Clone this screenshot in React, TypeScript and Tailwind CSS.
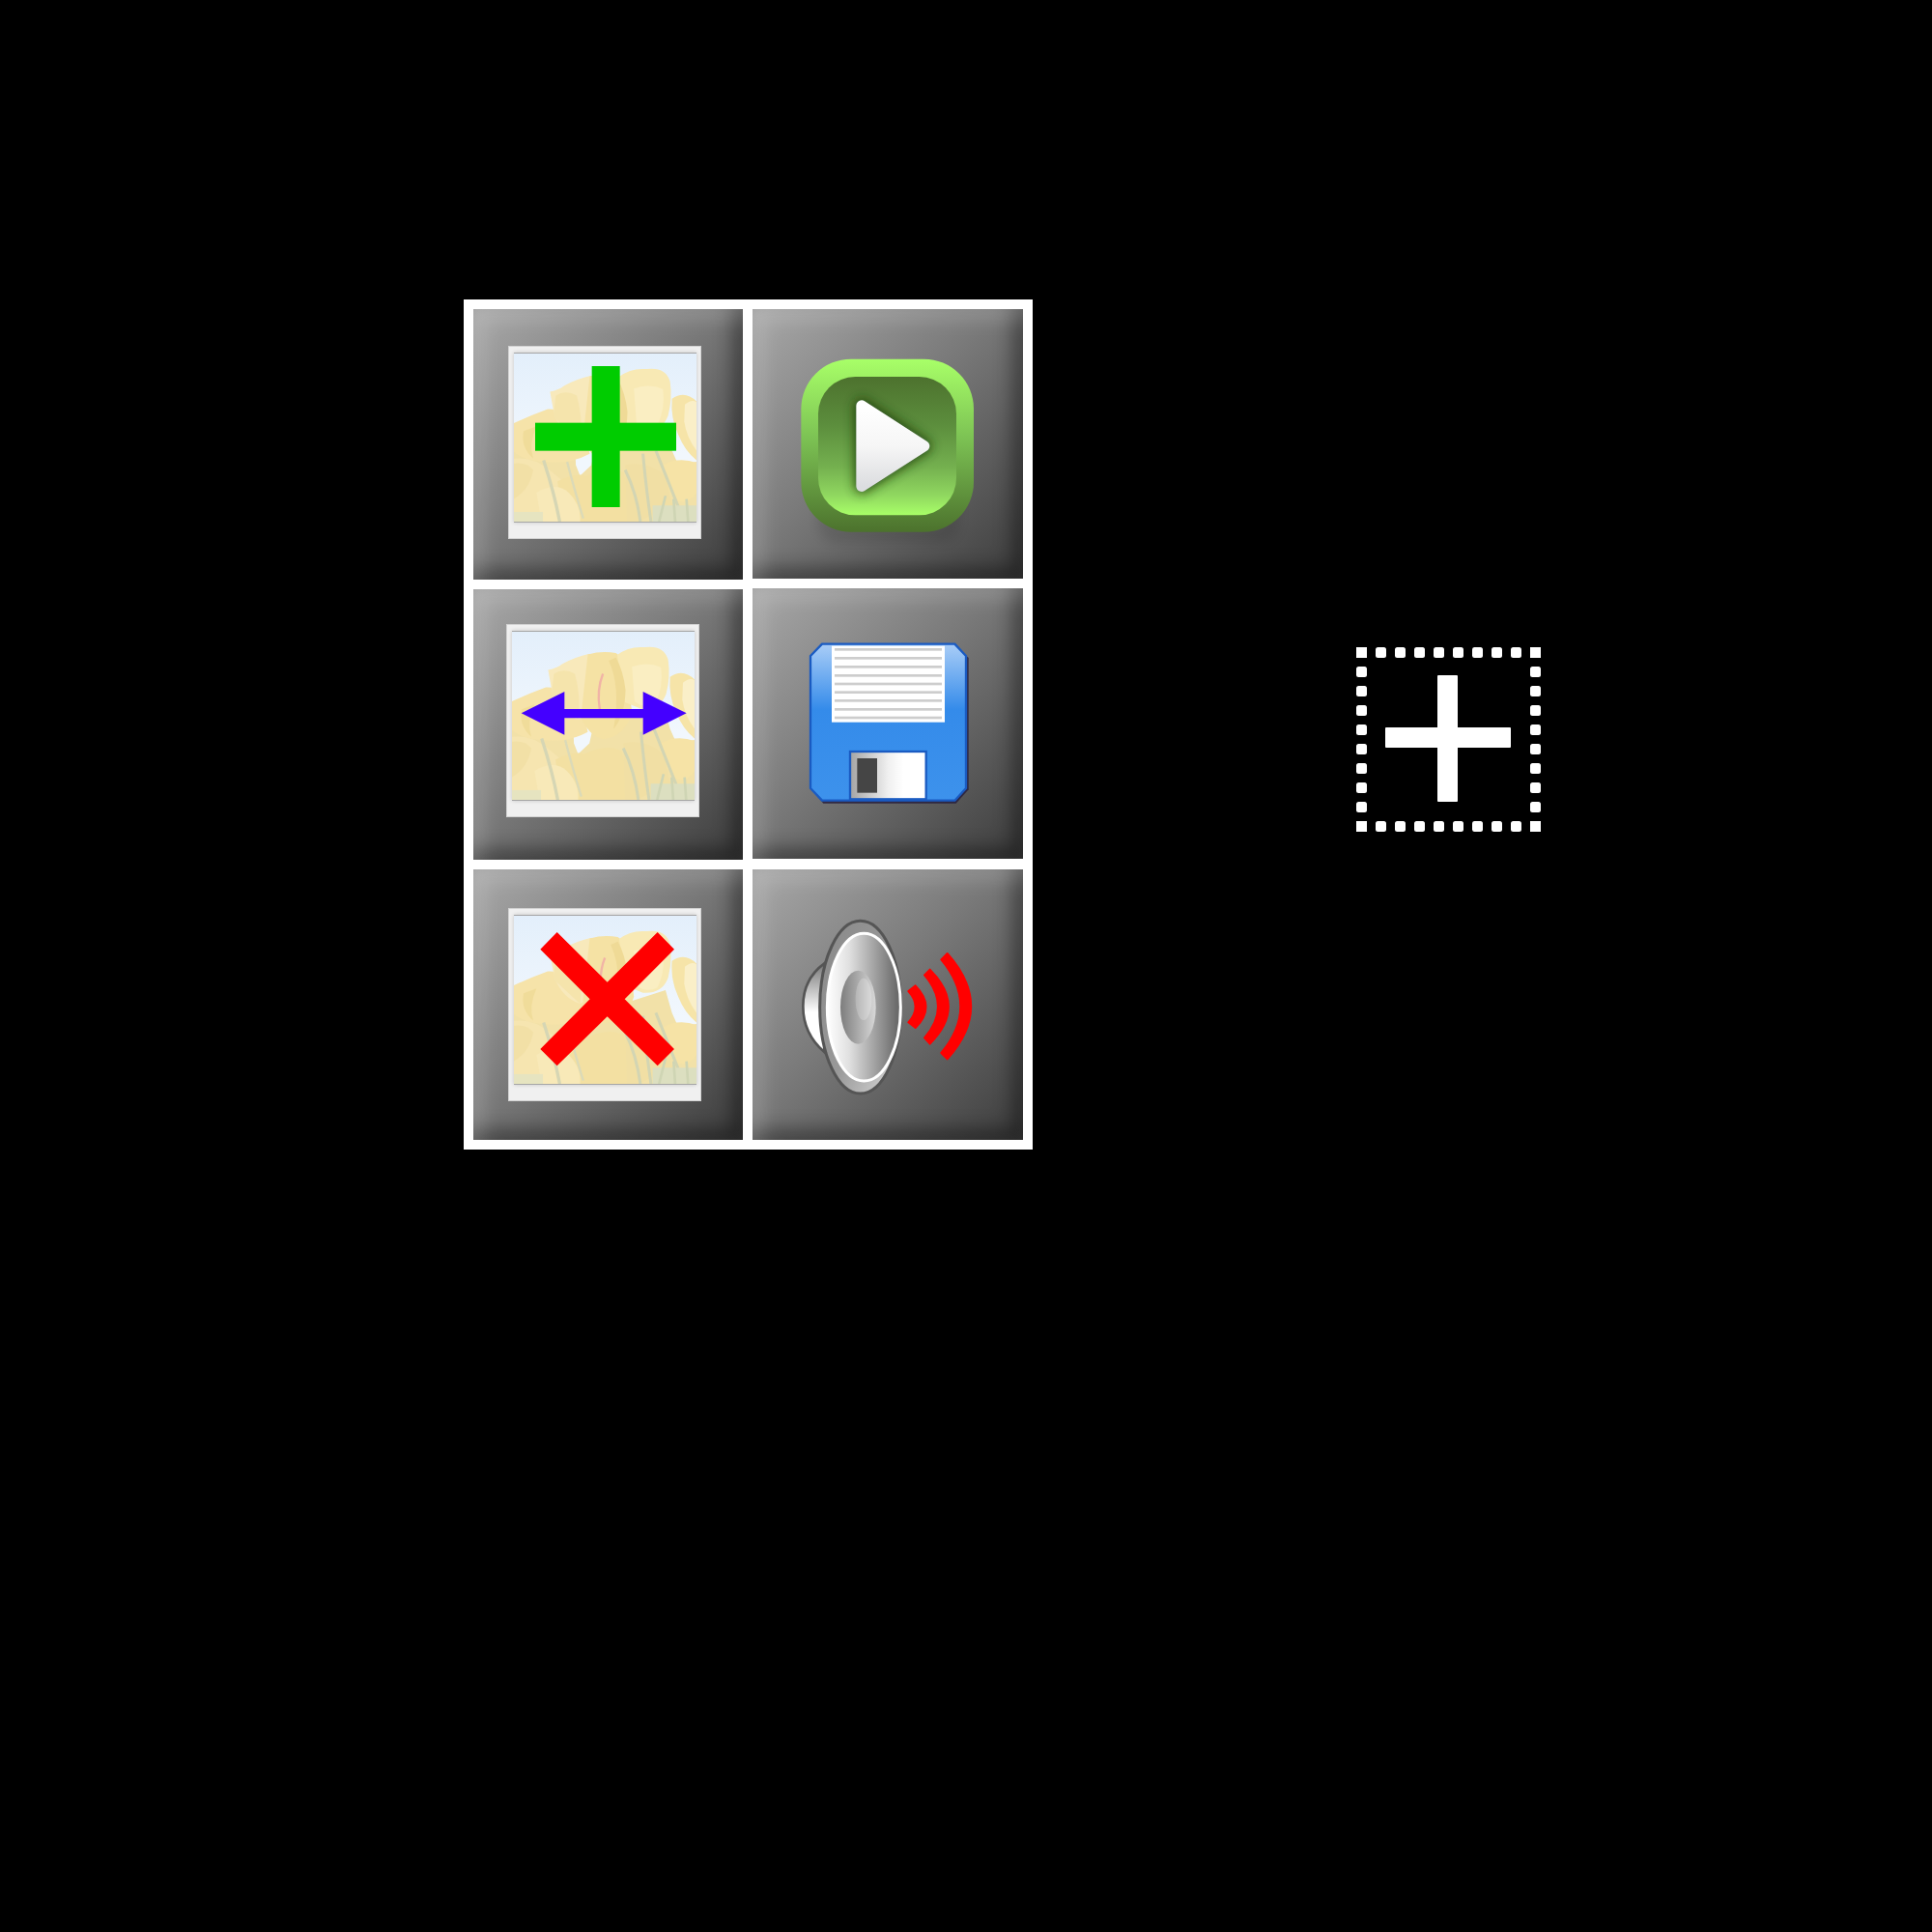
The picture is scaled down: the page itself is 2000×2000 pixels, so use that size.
import type { ReactNode } from "react";

function Tulip({ d, fill = "#f8e7b2" }: { d: string; fill?: string }) {
  return <path d={d} fill={fill} />;
}

function Photo() {
  return (
    <svg viewBox="0 0 566 520" className="block w-[189px] h-[174px]" preserveAspectRatio="none">
      <defs>
        <linearGradient id="sky" x1="0" y1="0" x2="0" y2="1">
          <stop offset="0" stopColor="#e3effb" />
          <stop offset="0.6" stopColor="#f1f7fd" />
        </linearGradient>
        <filter id="soft">
          <feGaussianBlur stdDeviation="1.6" />
        </filter>
      </defs>
      <rect width="566" height="520" fill="url(#sky)" />
      <g filter="url(#soft)">
        {/* lower band, with the sky showing only through two small gaps */}
        <path d="M0 290 L190 300 L192 345 L205 378 L240 345 L250 300 L470 230 L490 300 L510 345 L566 335 L566 520 L0 520 Z" fill="#f2e1a8" />
        {/* back row */}
        <Tulip d="M0 215 Q50 192 105 172 Q170 170 215 215 L235 310 Q170 345 90 335 Q30 330 0 305 Z" fill="#f6e3a9" />
        <Tulip d="M112 118 Q140 112 155 100 Q195 78 240 68 L262 200 Q250 255 205 272 Q150 255 125 190 Z" fill="#f8e9bb" />
        <Tulip d="M235 70 Q280 58 322 66 Q346 80 356 112 L372 250 Q350 325 282 332 Q235 320 214 262 Z" fill="#f5e2a4" />
        <Tulip d="M326 72 Q362 44 410 48 Q470 40 484 86 Q492 140 478 192 Q460 242 400 238 L350 218 Z" fill="#f8e9b4" />
        <Tulip d="M372 108 Q420 92 462 110 Q470 170 445 222 Q410 240 380 215 Z" fill="#faeec2" />
        <Tulip d="M490 140 Q530 112 566 148 L566 330 Q530 302 510 252 Q485 200 490 140 Z" fill="#f6e4a8" />
        <Tulip d="M530 158 Q550 140 566 150 L566 300 Q535 260 528 210 Z" fill="#faefc8" />
        {/* petal shading */}
        <path d="M30 240 Q20 290 60 325 Q45 280 70 225 Z" fill="#f0dc9a" />
        <path d="M300 90 Q338 170 315 300 Q350 260 352 180 Q345 120 322 80 Z" fill="#efda96" />
        <path d="M122 195 Q170 240 205 272 Q215 200 195 130 Q160 110 130 130 Z" fill="#f5e4ac" />
        {/* lower cluster */}
        <Tulip d="M0 325 Q60 318 110 360 Q165 400 195 450 L215 520 L0 520 Z" fill="#f6e5b0" />
        <Tulip d="M0 340 Q40 335 60 360 Q50 420 0 450 Z" fill="#f2e0a6" />
        <Tulip d="M135 395 Q190 368 225 378 Q290 345 340 368 L375 520 L150 520 Z" fill="#f3e0a2" />
        <Tulip d="M70 430 Q130 395 170 430 Q210 470 205 520 L85 520 Z" fill="#f8e9b8" />
        <Tulip d="M462 345 Q510 318 566 338 L566 430 Q540 472 500 452 Q470 420 462 345 Z" fill="#f6e3a6" />
        <Tulip d="M345 345 Q420 330 470 380 L492 470 L385 520 L350 520 Z" fill="#f1dfa4" />
        {/* stems */}
        <path d="M92 330 Q125 430 142 520" stroke="#d6d6b4" strokeWidth="10" fill="none" />
        <path d="M165 335 Q190 430 215 510" stroke="#dbdab8" strokeWidth="7" fill="none" />
        <path d="M345 360 Q380 430 392 520 M400 310 Q410 420 425 520 M440 300 Q480 400 512 480" stroke="#d3d5b3" strokeWidth="9" fill="none" />
        <rect x="430" y="470" width="136" height="50" fill="#dcdfc0" />
        <rect x="0" y="490" width="90" height="30" fill="#e6e4c0" />
        <path d="M450 520 L470 440 M500 520 L495 450 M540 520 L535 450" stroke="#cfd5b4" strokeWidth="8" />
        {/* red fleck on the centre tulip */}
        <path d="M282 130 Q262 180 272 240" stroke="#f1b4a6" strokeWidth="7" fill="none" />
      </g>
    </svg>
  );
}

function PhotoFrame({ className }: { className: string }) {
  return (
    <div className={`w-[200px] h-[200px] bg-[#f0f0f0] border border-[#d2d2d2] pl-[5px] pt-[6px] ${className}`}>
      <div className="w-[189px] border-y border-[#a6a6a6] shadow-[0_0_4px_rgba(0,0,0,0.18)]">
        <Photo />
      </div>
    </div>
  );
}

function Cell({ className, children }: { className: string; children: ReactNode }) {
  return (
    <div
      className={`relative overflow-hidden bg-[linear-gradient(135deg,#a8a8a8,#7a7a7a_45%,#3c3c3c)] shadow-[inset_10px_10px_20px_rgba(255,255,255,0.18),inset_-10px_-10px_20px_rgba(0,0,0,0.42)] ${className}`}
    >
      {children}
    </div>
  );
}

function Overlay({ viewBox, children }: { viewBox: string; children: ReactNode }) {
  return (
    <svg viewBox={viewBox} className="absolute inset-0 w-full h-full">
      {children}
    </svg>
  );
}

function PlayIcon() {
  return (
    <svg viewBox="27 60 840 837" className="block w-full h-full">
      <defs>
        <linearGradient id="playOuter" x1="0" y1="0" x2="0" y2="1">
          <stop offset="0" stopColor="#a8ff68" />
          <stop offset="0.45" stopColor="#7dc354" />
          <stop offset="1" stopColor="#4c722d" />
        </linearGradient>
        <linearGradient id="playInner" x1="0" y1="0" x2="0" y2="1">
          <stop offset="0" stopColor="#4d722e" />
          <stop offset="0.35" stopColor="#5c8e3d" />
          <stop offset="0.65" stopColor="#74b04f" />
          <stop offset="0.85" stopColor="#8fd65f" />
          <stop offset="1" stopColor="#a8ff68" />
        </linearGradient>
        <linearGradient id="playTriangle" x1="0" y1="0" x2="0" y2="1">
          <stop offset="0" stopColor="#ffffff" />
          <stop offset="0.5" stopColor="#f6f6f6" />
          <stop offset="1" stopColor="#dcdde0" />
        </linearGradient>
        <filter id="playBlur" x="-40%" y="-40%" width="180%" height="180%">
          <feGaussianBlur stdDeviation="18" />
        </filter>
        <clipPath id="playClip">
          <rect x="231" y="270" width="429" height="430" rx="115" />
        </clipPath>
      </defs>
      <rect x="230" y="570" width="440" height="215" rx="60" fill="#000" opacity="0.1" filter="url(#playBlur)" />
      <rect x="178" y="215" width="536" height="537" rx="155" fill="url(#playOuter)" />
      <rect x="231" y="270" width="429" height="430" rx="115" fill="url(#playInner)" />
      <g clipPath="url(#playClip)">
        <path
          d="M366 360 L560 485 L366 610 Z"
          fill="#1f3d10"
          stroke="#1f3d10"
          strokeWidth="44"
          strokeLinejoin="round"
          opacity="0.9"
          filter="url(#playBlur)"
        />
      </g>
      <path
        d="M366 360 L560 485 L366 610 Z"
        fill="url(#playTriangle)"
        stroke="url(#playTriangle)"
        strokeWidth="34"
        strokeLinejoin="round"
      />
    </svg>
  );
}

function FloppyIcon() {
  const lines = [217, 244, 271, 298, 324, 350, 376, 403, 429];
  return (
    <svg viewBox="27 27 840 840" className="block w-full h-full">
      <defs>
        <linearGradient id="floppyBody" x1="0" y1="0" x2="0" y2="1">
          <stop offset="0" stopColor="#a9cdf7" />
          <stop offset="0.42" stopColor="#348bea" />
          <stop offset="1" stopColor="#3d92ec" />
        </linearGradient>
        <linearGradient id="floppyShutter" x1="0" y1="0" x2="1" y2="0">
          <stop offset="0" stopColor="#a4a4a4" />
          <stop offset="0.5" stopColor="#f0f0f0" />
          <stop offset="0.7" stopColor="#ffffff" />
        </linearGradient>
      </defs>
      <path
        d="M243 206 L655 206 L698 243 L698 652 L659 695 L247 695 L211 652 L211 243 Z"
        fill="#2a2240"
        opacity="0.9"
      />
      <path
        d="M243 200 L655 200 L690 237 L690 648 L655 686 L243 686 L207 648 L207 237 Z"
        fill="url(#floppyBody)"
        stroke="#1a5bc2"
        strokeWidth="7"
        strokeLinejoin="round"
      />
      <rect x="273" y="206" width="351" height="237" fill="#ffffff" />
      {lines.map((y) => (
        <rect key={y} x="282" y={y - 4} width="333" height="8" fill="#cdcdcd" />
      ))}
      <rect x="330" y="534" width="236" height="148" fill="url(#floppyShutter)" stroke="#1a5bc2" strokeWidth="7" />
      <rect x="352" y="555" width="62" height="107" fill="#454545" />
    </svg>
  );
}

function SpeakerIcon() {
  return (
    <svg viewBox="27 30 840 840" className="block w-full h-full">
      <defs>
        <linearGradient id="spkBack" x1="0" y1="0" x2="0" y2="1">
          <stop offset="0" stopColor="#777" />
          <stop offset="0.55" stopColor="#ffffff" />
          <stop offset="1" stopColor="#ffffff" />
        </linearGradient>
        <linearGradient id="spkRim" x1="0" y1="0" x2="1" y2="1">
          <stop offset="0" stopColor="#888" />
          <stop offset="0.55" stopColor="#999" />
          <stop offset="1" stopColor="#ddd" />
        </linearGradient>
        <linearGradient id="spkFace" x1="0" y1="0" x2="1" y2="0">
          <stop offset="0" stopColor="#ffffff" />
          <stop offset="0.3" stopColor="#e0e0e0" />
          <stop offset="1" stopColor="#626262" />
        </linearGradient>
        <linearGradient id="spkCone" x1="0" y1="0" x2="1" y2="0">
          <stop offset="0" stopColor="#7d7d7d" />
          <stop offset="1" stopColor="#d8d8d8" />
        </linearGradient>
        <linearGradient id="spkDome" x1="0" y1="0" x2="1" y2="0">
          <stop offset="0" stopColor="#c4c4c4" />
          <stop offset="1" stopColor="#e4e4e4" />
        </linearGradient>
      </defs>
      <path d="M250 322 Q184 370 184 455 Q184 540 250 597 Z" fill="url(#spkBack)" stroke="#555" strokeWidth="8" />
      <ellipse cx="362" cy="458" rx="126" ry="268" fill="url(#spkRim)" stroke="#555" strokeWidth="9" />
      <ellipse cx="373" cy="458" rx="114" ry="229" fill="url(#spkFace)" stroke="#ffffff" strokeWidth="9" />
      <ellipse cx="355" cy="458" rx="55" ry="114" fill="url(#spkCone)" />
      <ellipse cx="372" cy="433" rx="25" ry="65" fill="url(#spkDome)" opacity="0.55" />
      <g fill="#ff0000" stroke="#ff0000" strokeWidth="6" strokeLinejoin="round">
        <path d="M533 391 Q598 457 533 522 L511 505 Q555 457 511 408 Z" />
        <path d="M578 341 Q693 456 578 572 L561 553 Q645 456 561 358 Z" />
        <path d="M632 291 Q779 455 632 619 L613 600 Q733 455 613 310 Z" />
      </g>
    </svg>
  );
}

function DottedAdd() {
  const steps = [0, 20, 40, 60, 80, 100, 120, 140, 160, 180];
  return (
    <svg viewBox="0 0 191 191" className="block w-[191px] h-[191px] ml-[335px] mt-[360px]">
      {steps.flatMap((a) =>
        steps
          .filter((b) => a === 0 || a === 180 || b === 0 || b === 180)
          .map((b) => {
            const corner = (a === 0 || a === 180) && (b === 0 || b === 180);
            return <rect key={`${a}-${b}`} x={a} y={b} width="11" height="11" rx={corner ? 0 : 2.5} fill="#fff" />;
          })
      )}
      <rect x="84" y="29" width="21" height="131" rx="1" fill="#fff" />
      <rect x="30" y="83" width="130" height="21" rx="1" fill="#fff" />
    </svg>
  );
}

export default function App() {
  return (
    <div className="w-[2000px] h-[2000px] bg-black flex items-start pl-[480px] pt-[310px]">
      <div className="flex gap-[10px] bg-white p-[10px]">
        <div className="flex flex-col gap-[10px] w-[279px]">
          <Cell className="h-[280px]">
            <PhotoFrame className="ml-[36px] mt-[38px]" />
            <Overlay viewBox="60 60 837 840">
              <rect x="428" y="237" width="87" height="438" fill="#00cc00" />
              <rect x="252" y="413" width="438" height="87" fill="#00cc00" />
            </Overlay>
          </Cell>
          <Cell className="h-[280px]">
            <PhotoFrame className="ml-[34px] mt-[36px]" />
            <Overlay viewBox="60 30 837 840">
              <path
                d="M209 415 L343 348 L343 402 L587 402 L587 348 L722 415 L587 482 L587 430 L343 430 L343 482 Z"
                fill="#4400ff"
              />
            </Overlay>
          </Cell>
          <Cell className="h-[280px]">
            <PhotoFrame className="ml-[36px] mt-[40px]" />
            <Overlay viewBox="60 30 837 840">
              <path
                d="M320 225 L476 380 L632 225 L684 278 L530 433 L684 588 L632 640 L476 487 L320 640 L268 588 L422 433 L268 278 Z"
                fill="#ff0000"
              />
            </Overlay>
          </Cell>
        </div>
        <div className="flex flex-col gap-[10px] w-[280px]">
          <Cell className="h-[279px]">
            <PlayIcon />
          </Cell>
          <Cell className="h-[280px]">
            <FloppyIcon />
          </Cell>
          <Cell className="h-[280px] mt-[1px]">
            <SpeakerIcon />
          </Cell>
        </div>
      </div>
      <DottedAdd />
    </div>
  );
}
